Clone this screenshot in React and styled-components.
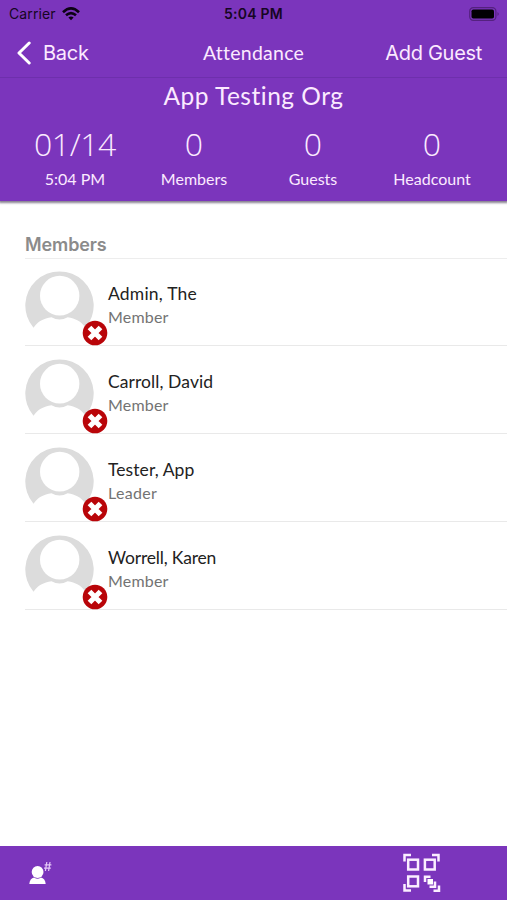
import React from 'react'

import styled, { createGlobalStyle } from 'styled-components'

const PURPLE = '#7b35bc'

const GlobalStyle = createGlobalStyle`
  * {
    box-sizing: border-box;
  }
  body {
    margin: 0;
    background: #fff;
  }
`;

const Screen = styled.div`
  width: 507px;
  height: 900px;
  display: flex;
  flex-direction: column;
  overflow: hidden;
  background: #fff;
  font-family: Lato, 'Open Sans', sans-serif;
  white-space: nowrap;
`;

const Text = styled.span`
  display: block;
  letter-spacing: ${({$spacing}) => $spacing || 0}px;
`;

const StatusBar = styled.div`
  height: 27px;
  padding: 0 7px 0 9px;
  display: grid;
  grid-template-columns: 1fr auto 1fr;
  align-items: center;
  color: #160623;
  font: 400 14px/27px Inter, sans-serif;
`;
const Carrier = styled.div`
  display: flex;
  align-items: center;
  gap: 6px;
`;
const Clock = styled(Text)`
  padding-right: 2px;
  font-weight: 600;
`;
const Battery = styled.svg`
  justify-self: end;
`;

const NavBar = styled.div`
  height: 51px;
  padding: 0 16px;
  display: grid;
  grid-template-columns: 1fr auto 1fr;
  align-items: center;
  color: #fbeaff;
  border-bottom: 1px solid #6e2fac;
`;
const BackButton = styled.div`
  display: flex;
  align-items: center;
  gap: 11px;
  font: 400 20px/51px Inter, sans-serif;
`;
const NavTitle = styled(Text)`
  font-size: 19.5px;
  line-height: 52px;
`;
const AddGuest = styled(Text)`
  justify-self: end;
  padding-right: 9px;
  font: 400 20px/51px Inter, sans-serif;
`;

const Header = styled.header`
  flex: none;
  height: 201px;
  background: ${PURPLE};
  box-shadow: 0 1px 2px 1px rgba(70, 60, 85, 0.65);
`;
const OrgName = styled(Text)`
  height: 31px;
  overflow: hidden;
  color: #fbeaff;
  font-size: 24.5px;
  line-height: 36px;
  text-align: center;
`;
const Stats = styled.div`
  padding: 16px 15.5px 0;
  display: grid;
  grid-template-columns: repeat(4, 1fr);
`;
const Stat = styled.div`
  display: flex;
  flex-direction: column;
  align-items: center;
  color: #fbeaff;
`;
const StatValue = styled(Text)`
  font-family: 'Open Sans', sans-serif;
  font-size: 32px;
  font-weight: 300;
  line-height: 38px;
`;
const StatLabel = styled(Text)`
  font-size: 16px;
  line-height: 32px;
`;

const List = styled.main`
  flex: 1;
  padding: 30px 0 0 25px;
`;
const SectionTitle = styled(Text)`
  height: 28px;
  margin-bottom: -1px;
  border-bottom: 1px solid #ededed;
  color: #8b8b8b;
  font: 600 18px/27px Inter, sans-serif;
`;
const Row = styled.div`
  height: 88px;
  padding-top: 13px;
  display: flex;
  gap: 14px;
  border-bottom: 1px solid #e9e9e9;
`;
const Avatar = styled.div`
  position: relative;
  width: 69px;
  height: 69px;
`;
const Badge = styled.svg`
  position: absolute;
  left: 57px;
  top: 49px;
`;
const Person = styled.div`
  padding-top: 11px;
`;
const PersonName = styled(Text)`
  color: #222;
  font-size: 17.5px;
  line-height: 24px;
`;
const Role = styled(Text)`
  color: #737373;
  font-size: 16px;
  line-height: 22px;
`;

const TabBar = styled.footer`
  flex: none;
  height: 54px;
  padding: 0 66px 0 28px;
  display: flex;
  align-items: center;
  justify-content: space-between;
  background: ${PURPLE};
`;

const stats = [
    {value: '01/14', label: '5:04 PM', spacing: -0.4},
    {value: '0', label: 'Members'},
    {value: '0', label: 'Guests'},
    {value: '0', label: 'Headcount'},
]

const members = [
    {name: 'Admin, The', role: 'Member', spacing: 0.2, roleSpacing: 0.2},
    {name: 'Carroll, David', role: 'Member', spacing: 0.08, roleSpacing: 0.2},
    {name: 'Tester, App', role: 'Leader', spacing: 0.08, roleSpacing: 0.3},
    {name: 'Worrell, Karen', role: 'Member', spacing: -0.18, roleSpacing: 0.2},
]

const WifiIcon = () => (
    <svg width="18" height="14" viewBox="0 0 18 14" fill="none" stroke="#0c0214" strokeWidth="2.6">
        <path d="M1 5.2Q9-2.4 17 5.2"/>
        <path d="M4 8.3Q9 3.8 14 8.3"/>
        <path d="M6.4 10.5Q9 8.3 11.6 10.5L9 13.3Z" fill="#0c0214" stroke="none"/>
    </svg>
)

const BatteryIcon = () => (
    <Battery width="31" height="14" viewBox="0 0 31 14">
        <rect x="0.7" y="0.7" width="26.2" height="12.6" rx="3.6" fill="none" stroke="#54217f" strokeWidth="1.2"/>
        <rect x="2.5" y="2.5" width="22.5" height="9" rx="1.8" fill="#020003"/>
        <path d="M28.5 5Q31 7 28.5 9Z" fill="#54217f"/>
    </Battery>
)

const BackIcon = () => (
    <svg width="16" height="24" viewBox="0 0 16 24" fill="none" stroke="#fff" strokeWidth="3" strokeLinecap="round" strokeLinejoin="round">
        <path d="M13.2 2L3 12L13.2 22"/>
    </svg>
)

const AvatarIcon = () => (
    <svg width="69" height="69" viewBox="0 0 69 69" display="block">
        <path
            d="M8.5 56.8A34.2 34.2 0 1 1 60.5 56.8C56 50 50.5 47.5 42.7 46.2Q34.5 51 26.5 46.2C18.5 47.5 13 50 8.5 56.8Z"
            fill="#dcdcdc"
        />
        <ellipse cx="34.7" cy="24.7" rx="19.7" ry="19.9" fill="#fff"/>
    </svg>
)

const AbsentBadge = () => (
    <Badge width="26" height="26" viewBox="0 0 26 26">
        <circle cx="13" cy="13" r="12.3" fill="#b90509"/>
        <path d="M7.5 7.5L18.5 18.5M18.5 7.5L7.5 18.5" stroke="#fff" strokeWidth="5.2"/>
    </Badge>
)

const HeadcountIcon = () => (
    <svg width="24" height="26" viewBox="0 0 24 26" fill="#fff">
        <circle cx="9.6" cy="12" r="5.9"/>
        <path d="M1.3 24Q1.8 18.2 6.2 17.5Q9.5 20 12.8 17.5Q17.2 18.2 17.7 24Z"/>
        <path d="M18.8 2L17.4 11M22 2L20.6 11M16.6 4.9H23.4M16 8.1H22.8" fill="none" stroke="#e5c8f7" strokeWidth="1.2"/>
    </svg>
)

const ScanIcon = () => (
    <svg width="39" height="40" viewBox="0 0 39 40" fill="none" stroke="#fbeeff" strokeWidth="2.5">
        <path d="M2.5 8.5V2H9M30 2H36.5V8.5M2.5 31V37.5H9"/>
        <rect x="6.2" y="6.7" width="9.8" height="9.8"/>
        <rect x="22.9" y="6.7" width="9.8" height="9.8"/>
        <rect x="6.2" y="23.5" width="9.8" height="9.8"/>
        <path d="M23 29V23.7H28.5M33 28.5V33.7H27.5M37 32.5V37.7H31.5"/>
        <path d="M25.5 26H31V31.5H25.5Z" fill="#fff" stroke="none"/>
    </svg>
)

const StatItem = ({stat}) => (
    <Stat>
        <StatValue $spacing={stat.spacing}>{stat.value}</StatValue>
        <StatLabel>{stat.label}</StatLabel>
    </Stat>
)

const MemberRow = ({member}) => (
    <Row>
        <Avatar>
            <AvatarIcon/>
            <AbsentBadge/>
        </Avatar>
        <Person>
            <PersonName $spacing={member.spacing}>{member.name}</PersonName>
            <Role $spacing={member.roleSpacing}>{member.role}</Role>
        </Person>
    </Row>
)

const App = () => (
    <Screen>
        <GlobalStyle/>
        <Header>
            <StatusBar>
                <Carrier>
                    <Text $spacing={0.1}>Carrier</Text>
                    <WifiIcon/>
                </Carrier>
                <Clock $spacing={0.25}>5:04 PM</Clock>
                <BatteryIcon/>
            </StatusBar>
            <NavBar>
                <BackButton>
                    <BackIcon/>
                    <Text $spacing={-0.25}>Back</Text>
                </BackButton>
                <NavTitle $spacing={0.25}>Attendance</NavTitle>
                <AddGuest $spacing={-0.3}>Add Guest</AddGuest>
            </NavBar>
            <OrgName $spacing={0.5}>App Testing Org</OrgName>
            <Stats>
                {stats.map(stat => <StatItem key={stat.label} stat={stat}/>)}
            </Stats>
        </Header>
        <List>
            <SectionTitle $spacing={-0.1}>Members</SectionTitle>
            {members.map(member => <MemberRow key={member.name} member={member}/>)}
        </List>
        <TabBar>
            <HeadcountIcon/>
            <ScanIcon/>
        </TabBar>
    </Screen>
)

export default App
